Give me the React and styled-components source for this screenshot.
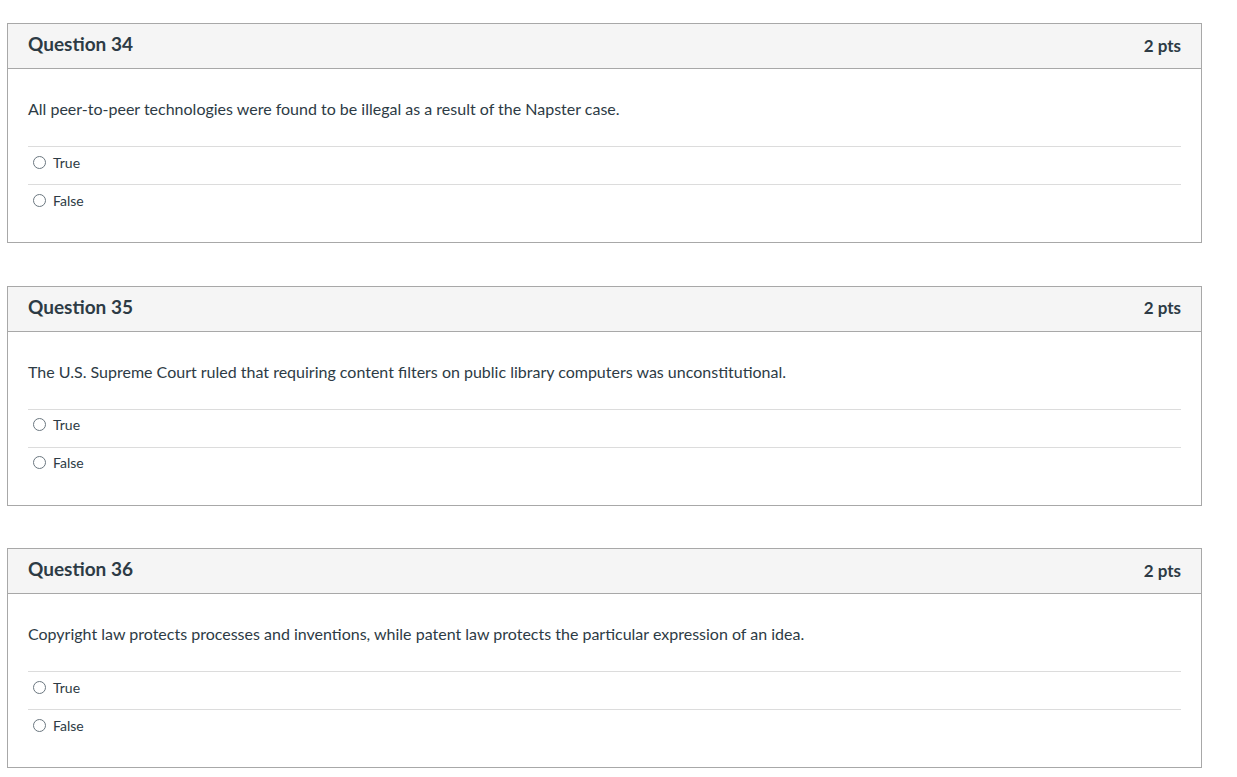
import styled, { createGlobalStyle } from "styled-components";

const GlobalStyle = createGlobalStyle`
  body {
    margin: 0;
    background: #fff;
    font-family: Lato, "Helvetica Neue", Arial, sans-serif;
    color: #2d3b45;
  }
`;

const questions = [
  {
    id: 34,
    text: "All peer-to-peer technologies were found to be illegal as a result of the Napster case.",
  },
  {
    id: 35,
    text: "The U.S. Supreme Court ruled that requiring content filters on public library computers was unconstitutional.",
  },
  {
    id: 36,
    text: "Copyright law protects processes and inventions, while patent law protects the particular expression of an idea.",
  },
];

function App() {
  return (
    <Page>
      <GlobalStyle />
      {questions.map((q) => (
        <Card key={q.id}>
          <Header>
            <Title>Question {q.id}</Title>
            <Points>2 pts</Points>
          </Header>
          <Body>
            <QuestionText>{q.text}</QuestionText>
            <Answers>
              {["True", "False"].map((a) => (
                <Answer key={a}>
                  <Radio />
                  <AnswerLabel>{a}</AnswerLabel>
                </Answer>
              ))}
            </Answers>
          </Body>
        </Card>
      ))}
    </Page>
  );
}

const Page = styled.div`
  padding: 23px 0 0 7px;
  width: 1195px;
  display: flex;
  flex-direction: column;
  gap: 42.5px;
`;

const Card = styled.div`
  border: 1px solid #a8a8a8;
  background: #fff;
`;

const Header = styled.div`
  height: 45px;
  box-sizing: border-box;
  background: #f5f5f5;
  border-bottom: 1px solid #a8a8a8;
  display: flex;
  align-items: center;
  justify-content: space-between;
  padding: 0 20px 5px;
`;

const Title = styled.div`
  font-size: 19px;
  font-weight: 700;
  color: #2d3b45;
`;

const Points = styled.div`
  font-size: 17px;
  font-weight: 700;
  color: #2d3b45;
  padding-top: 3px;
`;

const Body = styled.div`
  padding: 30px 20px 20px;
`;

const QuestionText = styled.p`
  margin: 0 0 27px;
  font-size: 16px;
  line-height: 20px;
`;

const Answers = styled.div`
  display: flex;
  flex-direction: column;
`;

const Answer = styled.div`
  height: 37px;
  box-sizing: content-box;
  border-top: 1px solid #dcdcdc;
  display: flex;
  align-items: center;
  padding: 0 0 0 5px;
  gap: 7px;
  & > * {
    margin-top: -7px;
  }
`;

const Radio = styled.span`
  width: 13px;
  height: 13px;
  border: 1px solid #6b7780;
  border-radius: 50%;
  box-sizing: border-box;
`;

const AnswerLabel = styled.span`
  font-size: 14px;
  color: #2d3b45;
`;

export default App;
